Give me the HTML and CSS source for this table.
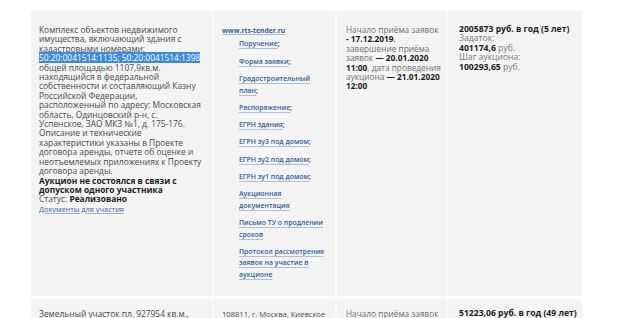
FILE: index.html
```html
<!DOCTYPE html>
<html>
<head>
  <meta charset="utf-8">
  <title>Торги</title>
  <link rel="stylesheet" href="styles.css">
</head>
<body>
  <div id="lots">
    <table class="lots-table">
      <colgroup>
        <col class="col-object">
        <col class="col-docs">
        <col class="col-dates">
        <col class="col-price">
      </colgroup>
      <tr>
        <td class="object">
          Комплекс объектов недвижимого имущества, включающий здания с кадастровыми номерами:
          <span class="picked">50:20:0041514:1135; 50:20:0041514:1398</span>
          общей площадью 1107,9кв.м. находящийся в федеральной собственности и составляющий Казну Российской Федерации, расположенный по адресу: Московская область, Одинцовский р-н, с. Успенское, ЗАО МКЗ №1, д. 175-176. Описание и технические характеристики указаны в Проекте договора аренды, отчете об оценке и неотъемлемых приложениях к Проекту договора аренды.
          <strong class="result">Аукцион не состоялся в связи с допуском одного участника</strong>
          <div>Статус: <strong>Реализовано</strong></div>
          <a class="doc-link" href="#">Документы для участия</a>
        </td>
        <td class="docs">
          <a class="site" href="#">www.rts-tender.ru</a>
          <ul class="doc-list">
            <li><a href="#">Поручение</a>;</li>
            <li><a href="#">Форма заявки</a>;</li>
            <li><a href="#">Градостроительный план</a>;</li>
            <li><a href="#">Распоряжение</a>;</li>
            <li><a href="#">ЕГРН здания</a>;</li>
            <li><a href="#">ЕГРН зу3 под домом</a>;</li>
            <li><a href="#">ЕГРН зу2 под домом</a>;</li>
            <li><a href="#">ЕГРН зу1 под домом</a>;</li>
            <li><a href="#">Аукционная документация</a></li>
            <li><a href="#">Письмо ТУ о продлении сроков</a></li>
            <li><a href="#">Протокол рассмотрения заявок на участие в аукционе</a></li>
          </ul>
        </td>
        <td class="dates">
          Начало приёма заявок <b class="date">- 17.12.2019</b>, завершение приёма заявок <b><span class="date">— 20.01.2020</span> 11:00</b>, дата проведения аукциона <b><span class="date">— 21.01.2020</span> 12:00</b>
        </td>
        <td class="price">
          <b>2005873 руб. в год (5 лет)</b><br>
          Задаток:<br>
          <b>401174,6</b> руб.<br>
          Шаг аукциона:<br>
          <b>100293,65</b> руб.
        </td>
      </tr>
      <tr>
        <td class="object">Земельный участок пл. 927954 кв.м., расположенный по адресу</td>
        <td class="docs"><span class="address">108811, г. Москва, Киевское шоссе</span></td>
        <td class="dates">Начало приёма заявок</td>
        <td class="price"><b>51223,06 руб. в год (49 лет)</b></td>
      </tr>
    </table>
  </div>
</body>
</html>
```

FILE: styles.css
```css
body {
  margin: 0;
  background-color: #fff;
  font-family: "Open Sans", sans-serif;
  color: #4a4a4a;
}

#lots {
  padding: 11px 0 0 31px;
}

.lots-table {
  width: 551px;
  table-layout: fixed;
  border-collapse: collapse;
}

.col-object { width: 182px; }
.col-docs { width: 123px; }
.col-dates { width: 111px; }
.col-price { width: 135px; }

.lots-table td {
  background-color: #f4f4f4;
  border: 2px solid #fafafa;
  border-top: none;
  vertical-align: top;
  padding: 14px 8px 10px 8px;
  font-size: 8.4px;
  line-height: 9.4px;
}

.lots-table tr + tr td {
  border-top: 3px solid #fbfbfb;
  padding-top: 10px;
}

.lots-table td:first-child { border-left: none; }
.lots-table td:last-child { border-right: none; }

.lots-table td.docs { padding-right: 5px; }
.lots-table td.dates { padding-left: 9px; padding-right: 5px; font-size: 8.3px; }
.lots-table td.price { padding-left: 11px; padding-right: 2px; font-size: 8.6px; }

strong, b {
  color: #1c1c1c;
  font-weight: bold;
}

.result {
  display: block;
}

.date {
  white-space: nowrap;
}

.picked {
  background-color: #3d8be0;
  color: #fff;
}

a {
  color: #2f5f9e;
}

.doc-link {
  color: #3567a6;
  font-size: 7.4px;
  text-decoration: underline;
  text-decoration-color: rgba(53, 103, 166, 0.5);
}

.site {
  font-weight: bold;
  font-size: 6.8px;
  text-decoration: underline;
  text-decoration-color: rgba(47, 95, 158, 0.4);
}

.doc-list {
  list-style: none;
  margin: 3px 0 0;
  padding: 0 0 0 17px;
  color: #222;
}

.doc-list li {
  font-size: 6.9px;
  line-height: 11.5px;
  margin-bottom: 5.8px;
  font-weight: 600;
}

.doc-list a {
  text-decoration: underline;
  text-decoration-color: rgba(47, 95, 158, 0.35);
  text-underline-offset: 1.5px;
}

.dates {
  color: #707070;
}

.price {
  color: #7a7a7a;
}

.address {
  font-size: 7.6px;
}
```
